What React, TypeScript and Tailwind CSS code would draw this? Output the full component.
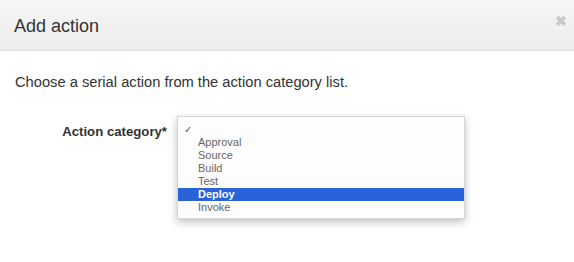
import React from "react";

const items = ["Approval", "Source", "Build", "Test", "Deploy", "Invoke"];

export default function App() {
  return (
    <div
      className="w-[574px] h-[262px] bg-white overflow-hidden relative"
      style={{ fontFamily: '"Liberation Sans", Arial, sans-serif' }}
    >
      <div className="h-[51px] bg-gradient-to-b from-[#f6f6f6] to-[#ececec] border-b border-[#dcdcdc] flex items-center justify-between pl-[14px] pr-[7px]">
        <div className="text-[18px] text-[#333] leading-none pt-[1px]">Add action</div>
        <div className="text-[#c8c8c8] text-[14px] leading-none font-bold -mt-[8px]">✖</div>
      </div>
      <div className="pl-[15px] pt-[23px] text-[14.7px] text-[#333] leading-[17px]">
        Choose a serial action from the action category list.
      </div>
      <div className="flex items-start mt-[25px]">
        <div className="w-[167px] text-right text-[13.2px] font-bold text-[#333] pt-[8px] leading-[16px]">
          Action category*
        </div>
        <div className="ml-[10px] w-[288px] border border-[#d4d4d4] bg-[#fdfdfd] shadow-[0_3px_8px_rgba(0,0,0,0.25)] pt-[6px] pb-[4px] text-[11px] leading-[13px]">
          <div className="h-[13px] pl-[6px] text-[#555] text-[10px] leading-[13px]">✓</div>
          {items.map((it) => (
            <div
              key={it}
              className={
                it === "Deploy"
                  ? "h-[13px] pl-[20px] bg-[#2a62d9] text-white font-semibold"
                  : "h-[13px] pl-[20px] text-[#666]"
              }
            >
              {it}
            </div>
          ))}
        </div>
      </div>
    </div>
  );
}
